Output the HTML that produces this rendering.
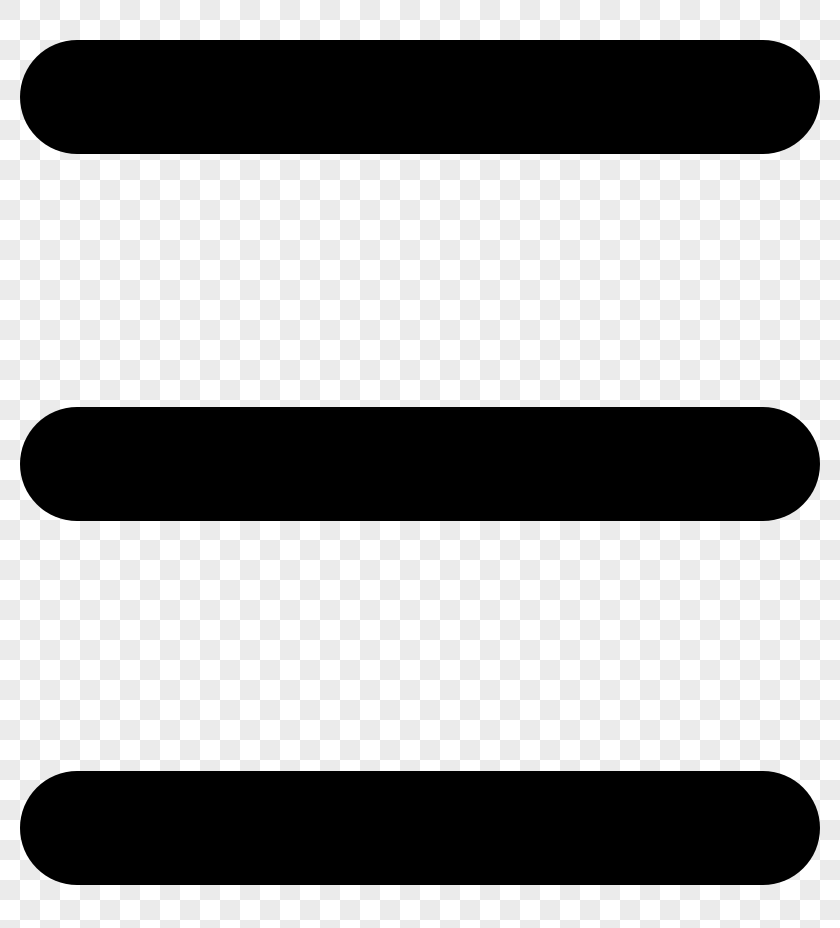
<!DOCTYPE html>
<html><head><style>
html,body{margin:0;padding:0;}
body{width:840px;height:928px;position:relative;overflow:hidden;
background-color:#fff;
background-image:
linear-gradient(45deg,#ebebeb 25%,transparent 25%,transparent 75%,#ebebeb 75%),
linear-gradient(45deg,#ebebeb 25%,transparent 25%,transparent 75%,#ebebeb 75%);
background-size:40px 40px;background-position:20px 0,0 20px;}
.b{position:absolute;left:20px;width:800px;height:114px;border-radius:57px;background:#000;}
</style></head><body>
<div class="b" style="top:40px"></div>
<div class="b" style="top:407px"></div>
<div class="b" style="top:771px"></div>
</body></html>
